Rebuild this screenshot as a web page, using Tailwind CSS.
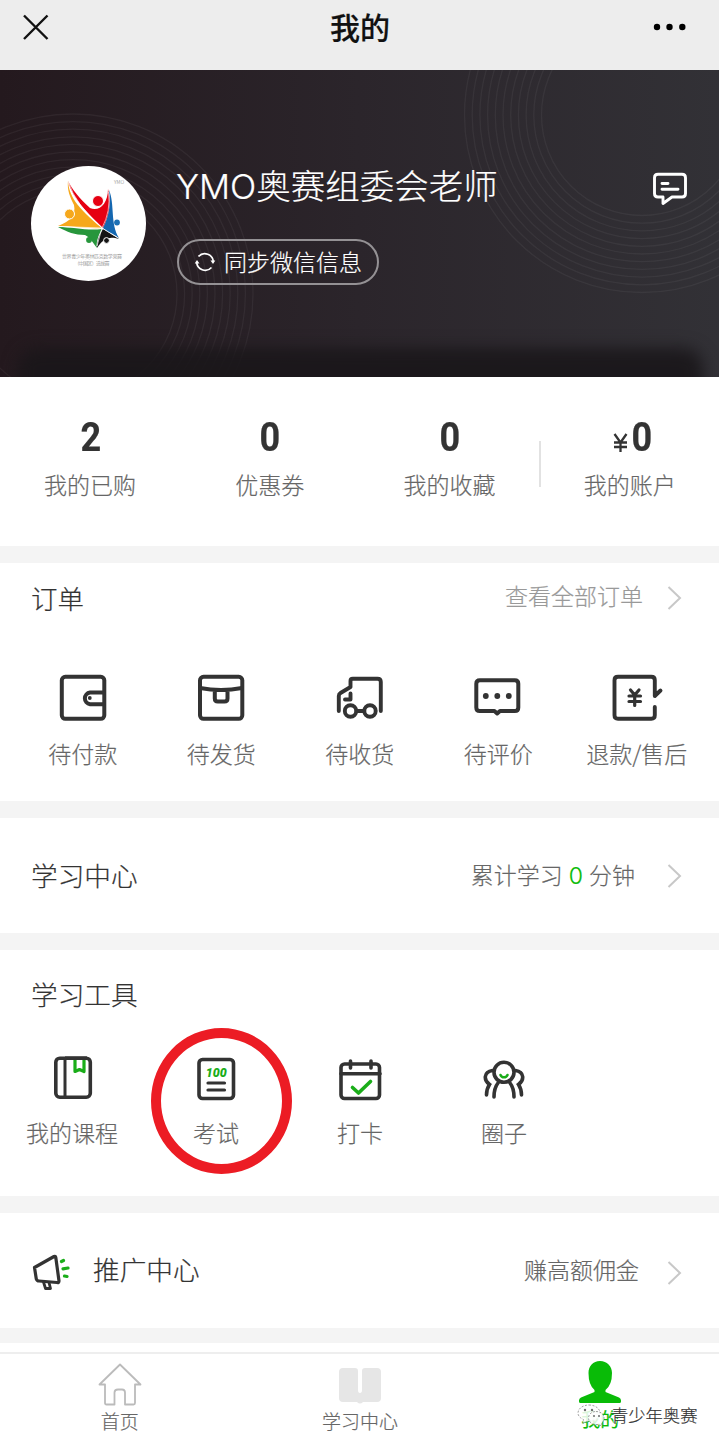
<!DOCTYPE html>
<html lang="zh-CN">
<head>
<meta charset="utf-8">
<title>我的</title>
<script src="https://cdn.jsdelivr.net/npm/@tailwindcss/browser@4"></script>
</head>
<body class="w-[719px] h-[1447px] overflow-hidden bg-white font-['Noto_Sans_CJK_SC',sans-serif] font-light text-[#666] flex flex-col [-webkit-text-stroke:0.2px]">

<header class="h-[70px] shrink-0 bg-[#ededed] flex justify-between px-[22px] text-black">
  <svg class="w-[28px] h-[28px] mt-[14px]" viewBox="0 0 28 28" fill="none" stroke="#111" stroke-width="2.4"><path d="M2 1.500L25.500 25M25.500 1.500L2 25"/></svg>
  <h1 class="text-[30px] leading-[52px] font-medium text-[#111] pl-[17px]">我的</h1>
  <svg class="w-[34px] h-[8px] mt-[23px] mr-[10px]" viewBox="0 0 34 8"><circle cx="4" cy="4" r="3.200"/><circle cx="16.500" cy="4" r="3.200"/><circle cx="29.300" cy="4" r="3.200"/></svg>
</header>

<section class="relative h-[307px] shrink-0 overflow-hidden bg-linear-to-r from-[#24191e] via-[#2b252b] to-[#323136]">
  <svg class="absolute inset-0 w-[719px] h-[307px]" viewBox="0 0 719 307" fill="none" stroke="#fff" stroke-opacity=".05" stroke-width="1.300">
    <g><circle cx="73" cy="224" r="104"/><circle cx="73" cy="224" r="111.600"/><circle cx="73" cy="224" r="119.200"/><circle cx="73" cy="224" r="126.800"/><circle cx="73" cy="224" r="134.400"/><circle cx="73" cy="224" r="142"/><circle cx="73" cy="224" r="149.600"/><circle cx="73" cy="224" r="157.200"/><circle cx="73" cy="224" r="164.800"/><circle cx="73" cy="224" r="172.400"/><circle cx="73" cy="224" r="180"/></g>
    <g><circle cx="642" cy="45" r="100.500"/><circle cx="642" cy="45" r="108.200"/><circle cx="642" cy="45" r="115.900"/><circle cx="642" cy="45" r="123.600"/><circle cx="642" cy="45" r="131.300"/><circle cx="642" cy="45" r="139"/><circle cx="642" cy="45" r="146.700"/><circle cx="642" cy="45" r="154.400"/><circle cx="642" cy="45" r="162.100"/><circle cx="642" cy="45" r="169.800"/><circle cx="642" cy="45" r="177.500"/></g>
  </svg>
  <div class="absolute left-[18px] right-[16px] top-[278px] h-[70px] rounded-[20px] bg-[#19161a]/90 blur-[8px]"></div>
  <div class="relative flex pl-[31px] pr-[31px] pt-[96px] text-white">
    <svg class="w-[115px] h-[115px] shrink-0" viewBox="0 0 115 115">
      <circle cx="57.500" cy="57.500" r="57.500" fill="#fff"/>
      <path d="M37 15C41 23 48 32 59 42C68 46 77 38 77 23C80 35 79 49 72 62C58 48 42 34 37 15Z" fill="#e60012"/>
      <path d="M37 15C38 29 45 41 71 62C55 63 42 60 27 60C40 55 45 49 43 39C39 31 36 24 37 15Z" fill="#f6a81c"/>
      <path d="M27 61C43 61 56 65 71 63C67 70 65 76 66 82C61 76 60 72 54 69C44 69 36 66 27 61Z" fill="#27963c"/>
      <path d="M78 24C84 38 79 58 88 72C82 68 75 65 72 62C78 50 80 38 78 24Z" fill="#1467b0"/>
      <path d="M72 63L88 73C78 70 73 72 66 82C66 75 68 69 72 63Z" fill="#151515"/>
      <circle cx="67" cy="35" r="5.500" fill="#e60012" stroke="#fff"/><circle cx="38.500" cy="48" r="5" fill="#f6a81c" stroke="#fff"/><circle cx="86" cy="56.500" r="2.900" fill="#1c70b5"/><circle cx="58" cy="74" r="2.900" fill="#27963c"/><circle cx="75.500" cy="74.500" r="2.900" fill="#151515" stroke="#fff"/>
      <path d="M37.500 16Q44 38 71 62Q80 45 77.500 26" stroke="#fff" stroke-width=".6" fill="none"/><path d="M71 62L29 60.500M71 62L66 80M71 62L86 71" stroke="#fff" stroke-width=".7" fill="none"/>
      <g fill="#777" text-anchor="middle"><text x="88" y="18" font-size="5">YMO</text><text x="61" y="92" font-size="5" textLength="60">世界青少年奥林匹克数学竞赛</text><text x="61" y="98.500" font-size="5" textLength="35">（中国区）选拔赛</text></g>
    </svg>
    <div class="ml-[31px] flex flex-col items-start">
      <div class="h-[36px] text-[34.500px] leading-[36px] whitespace-nowrap"><span class="font-['Inter',sans-serif] -ml-px">YMO</span>奥赛组委会老师</div>
      <div class="mt-[37px] w-[202px] h-[46px] rounded-full border-2 border-[#949194] flex items-center pl-[15px] gap-[8px]">
        <svg class="w-[22px] h-[20px] shrink-0" viewBox="0 0 22 20" fill="none" stroke="#fff" stroke-width="1.700"><path d="M4.500 4.500A8.500 8.500 0 0 1 19.300 10M17.500 15.500A8.500 8.500 0 0 1 2.700 10"/><path d="M.7 11.500L3 8L5.500 11.500ZM16.500 8.500L19 12L21.300 8.500Z" fill="#fff" stroke="none"/></svg>
        <span class="text-[23px] leading-[42px] whitespace-nowrap -mt-[3px]">同步微信信息</span>
      </div>
    </div>
    <svg class="w-[36px] h-[36px] ml-auto mt-[4px]" viewBox="0 0 36 36" fill="none" stroke="#fff" stroke-width="2.900" stroke-linecap="round" stroke-linejoin="round"><path d="M6 4.300H30Q33.500 4.300 33.500 7.800V23.500Q33.500 27 30 27H20L11 33.500V27H6Q2.500 27 2.500 23.500V7.800Q2.500 4.300 6 4.300ZM10 13.500H16M10 19.300H26"/></svg>
  </div>
</section>

<section class="relative h-[169px] shrink-0 grid grid-cols-4 pt-[40px] text-center text-[23px]">
  <div><div class="h-[40px] font-['Roboto',sans-serif] font-bold text-[41px] leading-[40px] text-[#333] pl-[2px]"><span class="inline-block scale-x-[.88]">2</span></div><div class="mt-[10px] leading-[34px]">我的已购</div></div>
  <div><div class="h-[40px] font-['Roboto',sans-serif] font-bold text-[41px] leading-[40px] text-[#333]"><span class="inline-block scale-x-[.88]">0</span></div><div class="mt-[10px] leading-[34px]">优惠券</div></div>
  <div><div class="h-[40px] font-['Roboto',sans-serif] font-bold text-[41px] leading-[40px] text-[#333]"><span class="inline-block scale-x-[.88]">0</span></div><div class="mt-[10px] leading-[34px]">我的收藏</div></div>
  <div class="relative"><i class="absolute left-0 top-[24px] w-[2px] h-[46px] bg-[#e2e2e2]"></i><div class="h-[40px] flex justify-center items-baseline font-['Roboto',sans-serif] font-bold text-[41px] leading-[40px] text-[#333] pl-[8px]"><svg class="w-[15px] h-[19px] translate-y-[1px] mr-[2px]" viewBox="0 0 15 19" fill="none" stroke="#333" stroke-width="2.300"><path d="M1.500 1L7.500 9.500L13.500 1M7.500 9V19M1 9.500H14M1 14H14"/></svg><span class="inline-block scale-x-[.88]">0</span></div><div class="mt-[10px] leading-[34px] pl-[1px]">我的账户</div></div>
</section>
<div class="h-[17px] shrink-0 bg-[#f4f4f4]"></div>

<section class="h-[238px] shrink-0">
  <div class="flex items-center h-[70px] pl-[31px] pr-[37px]">
    <h2 class="text-[26.500px] leading-[40px] text-[#333]">订单</h2>
    <span class="ml-auto text-[23px] leading-[34px] text-[#999] -mt-[6px]">查看全部订单</span>
    <svg class="w-[15px] h-[24px] ml-[24px]" viewBox="0 0 15 24" fill="none" stroke="#c8c8c8" stroke-width="2"><path d="M1.500 1L13 12L1.500 23"/></svg>
  </div>
  <div class="grid grid-cols-5 pl-[13.500px] pr-[13px] pt-[38px] text-center text-[23px] leading-[34px]">
    <div class="flex flex-col items-center"><svg class="w-[54px] h-[54px]" viewBox="0 0 54 54" fill="none" stroke="#333" stroke-width="4" stroke-linejoin="round"><rect x="5.800" y="5.800" width="42.500" height="42" rx="3.500"/><path d="M48 21.500H34A5.900 5.900 0 0 0 34 33.200H48"/><circle cx="33.800" cy="27" r="1.900" fill="#333" stroke="none"/></svg><span class="mt-[11px]">待付款</span></div>
    <div class="flex flex-col items-center"><svg class="w-[54px] h-[54px]" viewBox="0 0 54 54" fill="none" stroke="#333" stroke-width="4" stroke-linejoin="round"><rect x="6" y="5.800" width="42.300" height="42" rx="3.500"/><path d="M6 17Q27 21 48 17M20.800 19V27.500Q20.800 30.500 23.800 30.500H30.500Q33.500 30.500 33.500 27.500V19"/></svg><span class="mt-[11px]">待发货</span></div>
    <div class="flex flex-col items-center"><svg class="w-[54px] h-[54px]" viewBox="0 0 54 54" fill="none" stroke="#333" stroke-width="3.900" stroke-linecap="round" stroke-linejoin="round"><path d="M5.800 40V25Q5.800 23 7.500 22L17.500 16V10Q17.500 7.800 19.700 7.800H44.500Q47.800 7.800 47.800 11V40M17.500 22.500V28.500H12M24 40H30"/><circle cx="17.500" cy="40" r="5.700"/><circle cx="37" cy="40" r="5.700"/></svg><span class="mt-[11px]">待收货</span></div>
    <div class="flex flex-col items-center"><svg class="w-[54px] h-[54px]" viewBox="0 0 54 54" fill="none" stroke="#333" stroke-width="4" stroke-linejoin="round"><path d="M8.800 9.300H43.800Q47.300 9.300 47.300 12.800V36.500Q47.300 40 43.800 40H29L26.200 42.500L23.400 40H8.800Q5.300 40 5.300 36.500V12.800Q5.300 9.300 8.800 9.300Z"/><g fill="#333" stroke="none"><circle cx="14.800" cy="25" r="2.900"/><circle cx="26.300" cy="25" r="2.900"/><circle cx="37.800" cy="25" r="2.900"/></g></svg><span class="mt-[11px]">待评价</span></div>
    <div class="flex flex-col items-center"><svg class="w-[54px] h-[54px]" viewBox="0 0 54 54" fill="none" stroke="#333" stroke-width="3.900" stroke-linecap="round" stroke-linejoin="round"><path d="M44.800 36V44.300Q44.800 47.800 41.300 47.800H8Q4.500 47.800 4.500 44.300V9.300Q4.500 5.800 8 5.800H41.300Q44.800 5.800 44.800 9.300V25L50.500 19.500"/><path d="M20.500 19L24.700 24L29 19M24.700 24V34.500M19 25H30.500M19 30.500H30.500" stroke-width="3.200"/></svg><span class="mt-[11px] whitespace-nowrap">退款/售后</span></div>
  </div>
</section>
<div class="h-[17px] shrink-0 bg-[#f4f4f4]"></div>

<section class="h-[115px] shrink-0 flex items-center pl-[31px] pr-[37px]">
  <h2 class="text-[26.700px] leading-[40px] text-[#333] -mt-[2px]">学习中心</h2>
  <span class="ml-auto text-[23px] leading-[34px] -mt-[2px]">累计学习<span class="font-['Inter',sans-serif] text-[#09bb07] mx-[6px]">0</span>分钟</span>
  <svg class="w-[15px] h-[24px] ml-[32px]" viewBox="0 0 15 24" fill="none" stroke="#c8c8c8" stroke-width="2"><path d="M1.500 1L13 12L1.500 23"/></svg>
</section>
<div class="h-[17px] shrink-0 bg-[#f4f4f4]"></div>

<section class="h-[246px] shrink-0">
  <h2 class="h-[90px] pl-[31px] text-[26.700px] leading-[88px] text-[#333]">学习工具</h2>
  <div class="grid grid-cols-5 pt-[12px] -mr-[1px] text-center text-[23px] leading-[34px]">
    <div class="flex flex-col items-center"><svg class="w-[54px] h-[54px]" viewBox="0 0 54 54" fill="none" stroke="#333" stroke-width="3.600" stroke-linejoin="round"><rect x="10.800" y="6.200" width="34.500" height="39" rx="4"/><path d="M20 6V45" stroke-width="3"/><path d="M30 8V19.500L34.500 17.500L39 19.500V8" stroke="#1aad19" stroke-width="3.200"/><path d="M20 6.200H42"/></svg><span class="mt-[9px]">我的课程</span></div>
    <div class="relative flex flex-col items-center"><i class="absolute left-[7px] -top-[24px] w-[141px] h-[146px] rounded-[50%] border-[10px] border-[#ec1c24]"></i><svg class="w-[54px] h-[54px]" viewBox="0 0 54 54" fill="none" stroke="#333" stroke-width="3.600" stroke-linejoin="round"><rect x="10" y="7.500" width="34.500" height="39" rx="3.500"/><path d="M19 31H35.500M19 38H35.500" stroke-width="3.200" stroke-linecap="round"/><text x="27.300" y="24.500" text-anchor="middle" textLength="21" lengthAdjust="spacingAndGlyphs" font-family="Roboto" font-size="12.500" font-weight="900" font-style="italic" fill="#1aad19" stroke="none">100</text></svg><span class="mt-[9px]">考试</span></div>
    <div class="flex flex-col items-center"><svg class="w-[54px] h-[54px]" viewBox="0 0 54 54" fill="none" stroke="#333" stroke-width="3.600" stroke-linejoin="round"><rect x="8" y="12" width="38.500" height="34.500" rx="3.500"/><path d="M8 21.700H47M17.500 9V16M38 9V16" stroke-linecap="round"/><path d="M19.500 35.500L25.500 41L37.500 29.500" stroke="#1aad19" stroke-linecap="round"/></svg><span class="mt-[9px]">打卡</span></div>
    <div class="flex flex-col items-center"><svg class="w-[54px] h-[54px]" viewBox="0 0 54 54" fill="none" stroke="#333" stroke-width="3.600" stroke-linecap="round"><circle cx="27" cy="20.300" r="10"/><path d="M23.500 23A3.800 3.800 0 0 0 30.500 23" stroke="#1aad19" stroke-width="2.600"/><path d="M15.500 18.500C6.500 20 6.500 28 12.500 32.500Q9.500 37 9.500 43M38.500 18.500C47.500 20 47.500 28 41.500 32.500Q44.500 37 44.500 43M21 31Q17 36 17 45M33 31Q37 36 37 45"/></svg><span class="mt-[9px]">圈子</span></div>
  </div>
</section>
<div class="h-[17px] shrink-0 bg-[#f4f4f4]"></div>

<section class="h-[115px] shrink-0 flex items-center pl-[31px] pr-[37px]">
  <svg class="w-[40px] h-[40px] mt-[3px]" viewBox="0 0 40 40" fill="none" stroke="#333" stroke-width="3.200" stroke-linejoin="round" stroke-linecap="round"><path d="M3.500 15.500L23 4.500Q24.500 4 24.800 5.500L28 29Q28 31 26 30.500L8 29Q6 29 5.300 27Z"/><path d="M12.500 30L14.500 36.500H19.500L18 30.500" stroke-width="2.800"/><path d="M30.500 9.500L32.500 8.500M32 16.800L37 16M33.500 24L36 24.500" stroke="#1aad19"/></svg>
  <h2 class="text-[26.700px] leading-[40px] text-[#333] ml-[22px] -mt-[3px]">推广中心</h2>
  <span class="ml-auto text-[23px] leading-[34px] -mt-[4px]">赚高额佣金</span>
  <svg class="w-[15px] h-[24px] ml-[28px] mt-[4px]" viewBox="0 0 15 24" fill="none" stroke="#c8c8c8" stroke-width="2"><path d="M1.500 1L13 12L1.500 23"/></svg>
</section>
<div class="h-[15px] shrink-0 bg-[#f4f4f4]"></div>
<div class="h-[9px] shrink-0"></div>

<nav class="relative h-[95px] shrink-0 border-t-2 border-[#eee] grid grid-cols-3 pt-[7px] text-[19px] leading-[28px]">
  <div class="flex flex-col items-center"><svg class="w-[44px] h-[46px]" viewBox="0 0 44 46" fill="none" stroke="#bbb" stroke-width="1.800" stroke-linejoin="round"><path d="M22 3.500L42.500 23.500H37V42Q37 43.500 35.500 43.500H27V31.500Q27 28.500 24 28.500H20Q16.500 28.500 16.500 31.500V43.500H8.500Q7 43.500 7 42V23.500H1.500Z"/></svg><span>首页</span></div>
  <div class="flex flex-col items-center pl-px"><svg class="w-[44px] h-[46px]" viewBox="0 0 44 46" fill="#e6e6e6"><path d="M5 7H17Q20 7 20 10V29Q20 32 22 32T24 29V10Q24 7 27 7H39Q43 7 43 11V37Q43 41 39 41H25Q22 44 19 41H5Q1 41 1 37V11Q1 7 5 7Z"/></svg><span>学习中心</span></div>
  <div class="flex flex-col items-center text-[#09bb07] pl-[2px]"><svg class="w-[44px] h-[46px]" viewBox="0 0 44 46" fill="#09bb07"><path d="M22 0C29 0 34 5 34 12Q34 24 27.500 29V31L41 36.500Q43 37.500 43 39.500V40.500Q43 42 41.500 42H2.500Q1 42 1 40.500V39.500Q1 37.500 3 36.500L16.500 31V29Q10.500 24 10.500 12C10.500 5 15 0 22 0Z"/></svg><span class="-mt-[2px] font-normal">我的</span></div>
  <div class="absolute left-[577px] top-[47px] flex items-center">
    <svg class="w-[28px] h-[26px]" viewBox="0 0 28 26" fill="#fff" fill-opacity=".85" stroke="#888" stroke-width=".8"><path stroke-dasharray="2 1.500" d="M12 3C18 3 23 6.500 23 11S18 19 12 19L6 21L6.500 17.500Q1 15 1 11C1 6.500 6 3 12 3Z"/><path stroke-dasharray="2 1.500" d="M19 9.500C24 9.500 27 12.500 27 16Q27 19 24.500 21L25 24L21.500 22.500C15 23 11.500 20 11.500 16S15 9.500 19 9.500Z"/><g fill="#555" stroke="none"><circle cx="8" cy="8" r="1.200"/><circle cx="15" cy="8" r="1.200"/><circle cx="17" cy="14" r="1"/><circle cx="22" cy="14" r="1"/></g></svg>
    <span class="ml-[6px] text-[17.300px] leading-[28px] text-[#333] whitespace-nowrap [text-shadow:-1px_-1px_0_#fff,1px_-1px_0_#fff]">青少年奥赛</span>
  </div>
</nav>
</body>
</html>
